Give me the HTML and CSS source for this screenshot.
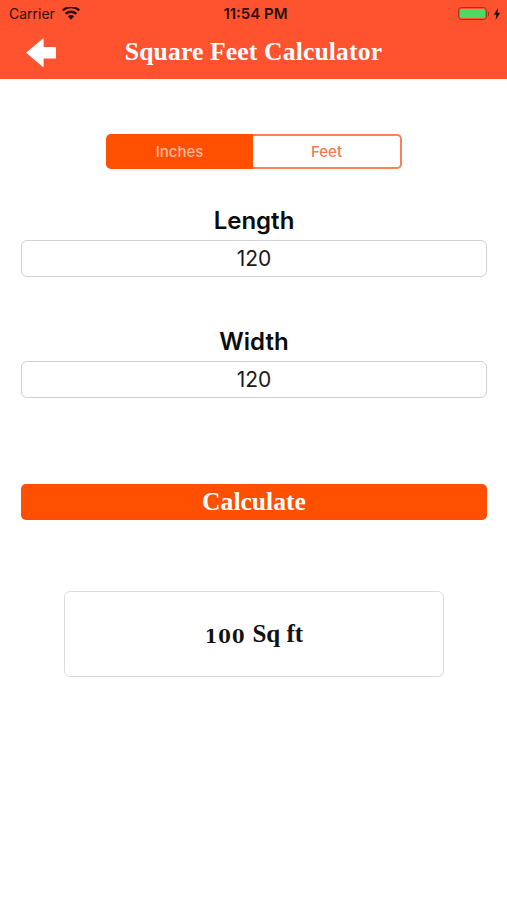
FILE: index.html
```html
<!DOCTYPE html>
<html lang="en">
<head>
<meta charset="utf-8">
<title>Square Feet Calculator</title>
<link rel="stylesheet" href="styles.css">
</head>
<body>
<header class="header">
  <div class="status">
    <div class="status-left">
      <span>Carrier</span>
      <svg class="wifi" viewBox="0 0 18 13" width="18" height="13"><path d="M9 12.8 5.9 9.3a4.4 4.4 0 0 1 6.2 0z" fill="#2a0f08"/><path d="M4.5 7.8a6.6 6.6 0 0 1 9 0l1.7-1.9a9.2 9.2 0 0 0-12.4 0z" fill="#2a0f08"/><path d="M1.4 4.3a11.2 11.2 0 0 1 15.2 0L18 2.6A13.4 13.4 0 0 0 0 2.6z" fill="#2a0f08"/></svg>
    </div>
    <div class="status-time">11:54 PM</div>
    <div class="status-right">
      <span class="battery"><span class="battery-fill"></span></span>
      <span class="nub"></span>
      <svg viewBox="0 0 8 12" width="8" height="12"><path d="M5 0 .8 6.8h2.6L2.6 12l4.6-7.2H4.5z" fill="#1d0a05"/></svg>
    </div>
  </div>
  <div class="nav">
    <svg class="back" viewBox="0 0 32 32" width="32" height="32"><path d="M18.6 1 1 15.8 18.6 30.6V21.5H31V10H18.6z" fill="#fff"/></svg>
    <h1 class="title">Square Feet Calculator</h1>
  </div>
</header>
<main class="main">
  <div class="segment">
    <div class="seg seg-on">Inches</div>
    <div class="seg seg-off">Feet</div>
  </div>
  <div class="label label-first">Length</div>
  <div class="field">120</div>
  <div class="label label-second">Width</div>
  <div class="field">120</div>
  <div class="calc">Calculate</div>
  <div class="result"><span class="digits">100</span> Sq ft</div>
</main>
</body>
</html>
```

FILE: styles.css
```css
* { box-sizing: border-box; }
html, body { margin: 0; padding: 0; background: #fff; }
body { width: 507px; height: 900px; overflow: hidden; font-family: "Inter", "Liberation Sans", sans-serif; color: #111; }
.header { background: #ff5330; height: 79px; }
.status { height: 27px; padding: 0 6px 0 9px; display: flex; align-items: center; justify-content: space-between; font-size: 14px; color: #2a0f08; position: relative; }
.status-left { display: flex; align-items: center; gap: 7px; font-size: 14px; }
.wifi { margin-top: -1px; }
.status-time { position: absolute; left: 4px; right: 0; text-align: center; font-weight: 600; font-size: 15px; }
.status-right { display: flex; align-items: center; position: relative; }
.battery { width: 29px; height: 13px; border: 1.5px solid #a8321a; border-radius: 3.5px; padding: 1px; display: block; }
.battery-fill { display: block; width: 100%; height: 100%; background: #4cd964; border-radius: 1.5px; }
.nub { width: 1.5px; height: 4px; background: #a8321a; margin: 0 4px 0 1px; }
.nav { height: 52px; display: flex; align-items: center; justify-content: center; position: relative; }
.back { position: absolute; left: 25px; top: 10px; }
.title { margin: 0; font: bold 25.6px "Liberation Serif", serif; color: #fff; position: relative; top: -1px; letter-spacing: 0.15px; }
.main { padding: 55px 20px 0 21px; display: flex; flex-direction: column; align-items: center; }
.segment { width: 296px; height: 35px; display: flex; font-size: 15px; font-weight: 500; }
.seg { flex: 1; display: flex; align-items: center; justify-content: center; }
.seg-on { background: #ff4f00; color: #ffb89c; border-radius: 5px 0 0 5px; }
.seg-off { background: #fff; color: #f4794d; border: solid #ff8055; border-width: 2px 2px 2px 0; border-radius: 0 5px 5px 0; }
.label { font-weight: 600; font-size: 24px; line-height: 28px; color: #0c0c0c; }
.label-first { margin-top: 38px; }
.label-second { margin-top: 51px; }
.field { width: 100%; height: 37px; margin-top: 5px; border: 1px solid #d2d2d2; border-radius: 6px; display: flex; align-items: center; justify-content: center; font-size: 21px; color: #1a1a1a; }
.calc { width: 100%; height: 36px; margin-top: 86px; background: #ff4f00; border-radius: 5px; display: flex; align-items: center; justify-content: center; color: #fff; font: bold 25.6px "Liberation Serif", serif; }
.result { width: 380px; height: 86px; margin-top: 71px; border: 1.5px solid #dcdcdc; border-radius: 6px; display: flex; align-items: center; justify-content: center; gap: 7px; font: bold 25px "Liberation Serif", serif; color: #111; }
.digits { font: bold 18px "DejaVu Serif", serif; letter-spacing: 1px; position: relative; top: 2px; }
```
